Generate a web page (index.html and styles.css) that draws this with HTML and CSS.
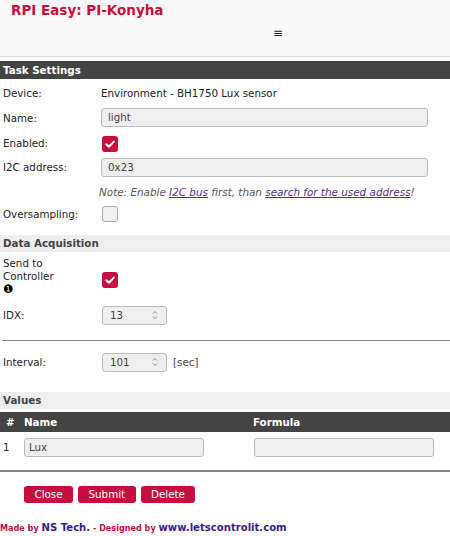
FILE: index.html
```html
<!DOCTYPE html>
<html>
<head>
<meta charset="utf-8">
<link rel="stylesheet" href="styles.css">
</head>
<body>
<div class="header">
  <h1 class="title">RPI Easy: PI-Konyha</h1>
  <div class="menu">≡</div>
</div>
<div class="bar dark">Task Settings</div>
<div class="row h-device"><div class="lbl">Device:</div><div>Environment - BH1750 Lux sensor</div></div>
<div class="row h-name"><div class="lbl">Name:</div><div class="input wide">light</div></div>
<div class="row h-enabled"><div class="lbl">Enabled:</div><span class="check on shift3"><svg viewBox="0 0 16 16" width="16" height="16"><path d="M4.3 8.2 L7 10.8 L11.8 5.6" fill="none" stroke="#fff" stroke-width="2" stroke-linecap="round" stroke-linejoin="round"/></svg></span></div>
<div class="row h-i2c"><div class="lbl">I2C address:</div><div class="input wide">0x23</div></div>
<div class="row h-note"><div class="lbl"></div><div class="note">Note: Enable <a href="#">I2C bus</a> first, than <a href="#">search for the used address</a>!</div></div>
<div class="row h-over"><div class="lbl">Oversampling:</div><span class="check off"></span></div>
<div class="bar light gap-top">Data Acquisition</div>
<div class="row h-send"><div class="lbl multi">Send to<br>Controller<br><span class="dot">❶</span></div><span class="check on shift8"><svg viewBox="0 0 16 16" width="16" height="16"><path d="M4.3 8.2 L7 10.8 L11.8 5.6" fill="none" stroke="#fff" stroke-width="2" stroke-linecap="round" stroke-linejoin="round"/></svg></span></div>
<div class="row h-idx"><div class="lbl">IDX:</div><div class="spin"><span>13</span><svg viewBox="0 0 8 12" width="8" height="12"><path d="M2 4.5 L4 2.5 L6 4.5 M2 7.5 L4 9.5 L6 7.5" fill="none" stroke="#888" stroke-width="1"/></svg></div></div>
<hr class="sep">
<div class="row h-interval"><div class="lbl">Interval:</div><div class="inline"><div class="spin"><span>101</span><svg viewBox="0 0 8 12" width="8" height="12"><path d="M2 4.5 L4 2.5 L6 4.5 M2 7.5 L4 9.5 L6 7.5" fill="none" stroke="#888" stroke-width="1"/></svg></div><span class="unit">[sec]</span></div></div>
<div class="bar light gap-values">Values</div>
<div class="thead"><div class="c-num">#</div><div class="c-name">Name</div><div class="c-formula">Formula</div></div>
<div class="trow"><div class="c-num">1</div><div class="c-name"><div class="input cell">Lux</div></div><div class="c-formula"><div class="input cell"></div></div></div>
<hr class="sep2">
<div class="buttons"><a class="btn" href="#">Close</a><a class="btn" href="#">Submit</a><a class="btn" href="#">Delete</a></div>
<div class="footer"><span class="small">Made by </span><span class="big">NS Tech.</span><span class="small"> - Designed by </span><span class="big">www.letscontrolit.com</span></div>
</body>
</html>
```
FILE: styles.css
```css
body {
  margin: 0;
  font-family: "DejaVu Sans", sans-serif;
  font-size: 10.3px;
  color: #222;
  background: #fff;
}
.header {
  height: 56px;
  background: #f8f8f8;
  border-bottom: 1px solid #ddd;
  margin-bottom: 4px;
}
.title {
  margin: 0;
  padding: 2px 0 0 11px;
  font-size: 13.5px;
  line-height: 17px;
  color: #c5103f;
  font-weight: bold;
}
.menu {
  padding: 7px 0 0 273px;
  font-size: 12px;
  line-height: 14px;
  color: #222;
}
.bar {
  padding-left: 3px;
  font-weight: bold;
}
.dark {
  height: 18px;
  line-height: 18px;
  background: #444;
  color: #fff;
}
.light {
  height: 17px;
  line-height: 17px;
  background: #eee;
  color: #444;
}
.gap-top { margin-top: 13px; }
.gap-values { margin-top: 9px; }
.row {
  display: grid;
  grid-template-columns: 98px 1fr;
  align-items: center;
  padding-left: 3px;
}
.h-device { height: 27px; }
.h-name { height: 23px; }
.h-enabled { height: 27px; }
.h-i2c { height: 22px; }
.h-note { height: 27px; }
.h-over { height: 17px; }
.h-send { height: 48px; }
.h-idx { height: 30px; }
.h-interval { height: 42px; }
.lbl.multi { line-height: 13px; }
.dot { font-size: 11.5px; color: #000; }
.input {
  box-sizing: border-box;
  height: 19px;
  line-height: 17px;
  background: #eee;
  border: 1px solid #bbb;
  border-radius: 3px;
  padding-left: 6px;
  color: #444;
}
.wide { width: 327px; }
.check {
  box-sizing: border-box;
  width: 16px;
  height: 16px;
  border-radius: 3px;
  display: block;
  margin-left: 1px;
}
.check svg { display: block; }
.check.on { background: #c5103f; }
.check.off { background: #f0f0f0; border: 1px solid #aaa; }
.shift3 { margin-top: 3px; }
.shift8 { margin-top: 8px; }
.note {
  font-style: italic;
  color: #555;
  margin-left: -2px;
  font-size: 10.4px;
}
.note a { color: #5b2a94; }
.spin {
  box-sizing: border-box;
  width: 65px;
  height: 19px;
  margin-left: 1px;
  background: #eee;
  border: 1px solid #bbb;
  border-radius: 3px;
  display: flex;
  align-items: center;
  justify-content: space-between;
  padding: 0 7px 0 7px;
  color: #444;
}
.spin svg { display: block; }
.inline { display: flex; align-items: center; gap: 6px; }
.unit { color: #444; }
.sep {
  margin: 10px 0 0 2px;
  border: 0;
  height: 1px;
  background: #888;
}
.thead, .trow {
  display: grid;
  grid-template-columns: 20px 230px 1fr;
  align-items: center;
}
.thead {
  margin-top: 3px;
  height: 20px;
  background: #444;
  color: #fff;
  font-weight: bold;
}
.thead .c-num { padding-left: 6px; }
.thead .c-name { padding-left: 4px; }
.thead .c-formula { padding-left: 3px; }
.trow { height: 30px; }
.trow .c-num { padding-left: 3px; }
.trow .c-name, .trow .c-formula { padding-left: 4px; }
.cell { width: 180px; padding-left: 4px; }
.sep2 {
  margin: 8px 0 0;
  border: 0;
  height: 2px;
  background: #888;
}
.buttons {
  margin-top: 14px;
  padding-left: 24px;
  display: flex;
  gap: 5px;
}
.btn {
  display: block;
  height: 17px;
  line-height: 17px;
  padding: 0 10.5px;
  background: #c5103f;
  color: #fff;
  text-decoration: none;
  border-radius: 3px;
}
.footer {
  margin-top: 18px;
  line-height: 12px;
  font-weight: bold;
}
.footer .small { font-size: 8.1px; color: #c5103f; }
.footer .big { font-size: 10.1px; color: #3d1a8a; }
```
